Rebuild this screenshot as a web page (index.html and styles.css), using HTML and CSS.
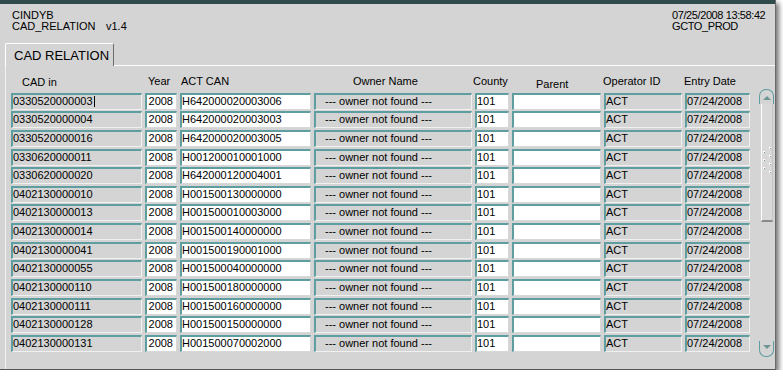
FILE: index.html
```html
<!DOCTYPE html>
<html>
<head>
<meta charset="utf-8">
<title>CAD_RELATION</title>
<link rel="stylesheet" href="styles.css">
</head>
<body>
<div class="window">
  <div class="titlebar"></div>
  <header class="head">
    <div class="head-left">
      <div>CINDYB</div>
      <div><span class="app">CAD_RELATION</span>v1.4</div>
    </div>
    <div class="head-right">
      <div>07/25/2008 13:58:42</div>
      <div>GCTO_PROD</div>
    </div>
  </header>
  <div class="tabs">
    <div class="tab">CAD RELATION</div>
    <div class="tabfill"></div>
  </div>
  <div class="panel">
    <div class="table">
      <div class="th th-cad">CAD in</div>
      <div class="th th-year">Year</div>
      <div class="th th-can">ACT CAN</div>
      <div class="th th-owner">Owner Name</div>
      <div class="th th-county">County</div>
      <div class="th th-parent">Parent</div>
      <div class="th th-op">Operator ID</div>
      <div class="th th-date">Entry Date</div>

      <div class="f g">0330520000003<span class="caret"></span></div><div class="f w r">2008</div><div class="f w">H642000020003006</div><div class="f g owner">--- owner not found ---</div><div class="f w">101</div><div class="f w"></div><div class="f g">ACT</div><div class="f g">07/24/2008</div>
      <div class="f g">0330520000004</div><div class="f w r">2008</div><div class="f w">H642000020003003</div><div class="f g owner">--- owner not found ---</div><div class="f w">101</div><div class="f w"></div><div class="f g">ACT</div><div class="f g">07/24/2008</div>
      <div class="f g">0330520000016</div><div class="f w r">2008</div><div class="f w">H642000020003005</div><div class="f g owner">--- owner not found ---</div><div class="f w">101</div><div class="f w"></div><div class="f g">ACT</div><div class="f g">07/24/2008</div>
      <div class="f g">0330620000011</div><div class="f w r">2008</div><div class="f w">H001200010001000</div><div class="f g owner">--- owner not found ---</div><div class="f w">101</div><div class="f w"></div><div class="f g">ACT</div><div class="f g">07/24/2008</div>
      <div class="f g">0330620000020</div><div class="f w r">2008</div><div class="f w">H642000120004001</div><div class="f g owner">--- owner not found ---</div><div class="f w">101</div><div class="f w"></div><div class="f g">ACT</div><div class="f g">07/24/2008</div>
      <div class="f g">0402130000010</div><div class="f w r">2008</div><div class="f w">H001500130000000</div><div class="f g owner">--- owner not found ---</div><div class="f w">101</div><div class="f w"></div><div class="f g">ACT</div><div class="f g">07/24/2008</div>
      <div class="f g">0402130000013</div><div class="f w r">2008</div><div class="f w">H001500010003000</div><div class="f g owner">--- owner not found ---</div><div class="f w">101</div><div class="f w"></div><div class="f g">ACT</div><div class="f g">07/24/2008</div>
      <div class="f g">0402130000014</div><div class="f w r">2008</div><div class="f w">H001500140000000</div><div class="f g owner">--- owner not found ---</div><div class="f w">101</div><div class="f w"></div><div class="f g">ACT</div><div class="f g">07/24/2008</div>
      <div class="f g">0402130000041</div><div class="f w r">2008</div><div class="f w">H001500190001000</div><div class="f g owner">--- owner not found ---</div><div class="f w">101</div><div class="f w"></div><div class="f g">ACT</div><div class="f g">07/24/2008</div>
      <div class="f g">0402130000055</div><div class="f w r">2008</div><div class="f w">H001500040000000</div><div class="f g owner">--- owner not found ---</div><div class="f w">101</div><div class="f w"></div><div class="f g">ACT</div><div class="f g">07/24/2008</div>
      <div class="f g">0402130000110</div><div class="f w r">2008</div><div class="f w">H001500180000000</div><div class="f g owner">--- owner not found ---</div><div class="f w">101</div><div class="f w"></div><div class="f g">ACT</div><div class="f g">07/24/2008</div>
      <div class="f g">0402130000111</div><div class="f w r">2008</div><div class="f w">H001500160000000</div><div class="f g owner">--- owner not found ---</div><div class="f w">101</div><div class="f w"></div><div class="f g">ACT</div><div class="f g">07/24/2008</div>
      <div class="f g">0402130000128</div><div class="f w r">2008</div><div class="f w">H001500150000000</div><div class="f g owner">--- owner not found ---</div><div class="f w">101</div><div class="f w"></div><div class="f g">ACT</div><div class="f g">07/24/2008</div>
      <div class="f g">0402130000131</div><div class="f w r">2008</div><div class="f w">H001500070002000</div><div class="f g owner">--- owner not found ---</div><div class="f w">101</div><div class="f w"></div><div class="f g">ACT</div><div class="f g">07/24/2008</div>
    </div>
    <div class="scroll">
      <div class="sbtn up"><span class="tri-up"></span></div>
      <div class="thumb">
        <svg class="grip" width="10" height="28" viewBox="0 0 10 28">
          <rect x="6" y="0" width="2" height="2" fill="#ffffff"/><rect x="7" y="1" width="1" height="1" fill="#6fa3a3"/>
          <rect x="0" y="4" width="2" height="2" fill="#ffffff"/><rect x="1" y="5" width="1" height="1" fill="#6fa3a3"/>
          <rect x="6" y="8" width="2" height="2" fill="#ffffff"/><rect x="7" y="9" width="1" height="1" fill="#6fa3a3"/>
          <rect x="0" y="12" width="2" height="2" fill="#ffffff"/><rect x="1" y="13" width="1" height="1" fill="#6fa3a3"/>
          <rect x="6" y="16" width="2" height="2" fill="#ffffff"/><rect x="7" y="17" width="1" height="1" fill="#6fa3a3"/>
          <rect x="0" y="20" width="2" height="2" fill="#ffffff"/><rect x="1" y="21" width="1" height="1" fill="#6fa3a3"/>
          <rect x="6" y="24" width="2" height="2" fill="#ffffff"/><rect x="7" y="25" width="1" height="1" fill="#6fa3a3"/>
        </svg>
      </div>
      <div class="track"></div>
      <div class="sbtn down"><span class="tri-down"></span></div>
    </div>
  </div>
</div>
</body>
</html>
```
FILE: styles.css
```css
html, body {
  margin: 0;
  padding: 0;
  background: #ffffff;
}
body {
  font-family: "Liberation Sans", Arial, sans-serif;
  font-size: 11px;
  color: #000;
}
.window {
  width: 775px;
  height: 369px;
  background: #d4d4d4;
  border-right: 1px solid #6a6a6a;
  border-bottom: 1px solid #555;
  box-shadow: 3px 3px 5px rgba(0, 0, 0, 0.55);
  display: flex;
  flex-direction: column;
  overflow: hidden;
}
.titlebar {
  height: 4px;
  flex: none;
  background: #2f4a4b;
}
.head {
  flex: none;
  height: 39px;
  box-sizing: border-box;
  display: flex;
  padding: 6px 0 0 12px;
  line-height: 11px;
}
.app {
  display: inline-block;
  width: 94px;
}
.head-right {
  margin-left: auto;
  width: 103px;
  letter-spacing: -0.4px;
  white-space: nowrap;
}
.tabs {
  flex: none;
  height: 23px;
  display: flex;
}
.tab {
  margin-left: 5px;
  width: 99px;
  box-sizing: content-box;
  padding: 4px 0 0 8px;
  border-top: 1px solid #fff;
  border-left: 1px solid #fff;
  border-right: 1px solid #6c6c6c;
  border-radius: 2px 2px 0 0;
  font-size: 13px;
  line-height: 15px;
  white-space: nowrap;
}
.tabfill {
  flex: 1;
  border-bottom: 1px solid #fff;
}
.panel {
  flex: 1;
  margin-left: 5px;
  border-left: 1px solid #f2f2f2;
  padding: 6px 0 0 5px;
  display: flex;
  gap: 9px;
  align-items: flex-start;
}
.table {
  display: grid;
  grid-template-columns: 131px 32px 131px 158px 34px 89px 78px 65px;
  grid-template-rows: 19px;
  grid-auto-rows: 17px;
  column-gap: 3px;
  row-gap: 1.65px;
}
.th {
  padding-top: 3px;
  line-height: 12px;
  white-space: nowrap;
}
.th-cad { padding-left: 11px; padding-top: 4px; }
.th-year { padding-left: 3px; }
.th-can { padding-left: 1px; }
.th-owner { padding-left: 39px; }
.th-county { margin-left: -2px; }
.th-parent { padding-left: 24px; padding-top: 6px; }
.th-op { margin-left: -1px; }
.th-date { margin-left: -1px; }
.f {
  position: relative;
  box-sizing: border-box;
  height: 17px;
  border-top: 2px solid #5f9ea0;
  border-left: 2px solid #5f9ea0;
  border-right: 1px solid #f0f0f0;
  border-bottom: 1px solid #f0f0f0;
  line-height: 13px;
  padding-left: 0;
  white-space: nowrap;
  overflow: hidden;
}
.g {
  background: #d4d4d4;
}
.w {
  background: #fff;
  border-right-color: #d8d8d8;
  border-bottom-color: #d8d8d8;
}
.r {
  text-align: right;
  padding-right: 3px;
}
.owner {
  padding-left: 9px;
}
.caret {
  display: inline-block;
  width: 1px;
  height: 11px;
  background: #000;
  vertical-align: -2px;
  margin-left: 1px;
}
.scroll {
  width: 15px;
  margin-top: 17px;
  height: 268px;
  display: flex;
  flex-direction: column;
}
.sbtn {
  box-sizing: border-box;
  display: flex;
  align-items: center;
  justify-content: center;
  background: #d4d4d4;
  border: 1px solid #5f9ea0;
}
.sbtn.up {
  height: 15px;
  border-bottom: none;
  border-radius: 7px 7px 0 0;
  padding-top: 2px;
}
.sbtn.down {
  height: 16px;
  border-top: none;
  border-radius: 0 0 7px 7px;
  padding-bottom: 3px;
}
.tri-up {
  width: 0;
  height: 0;
  border-left: 4px solid transparent;
  border-right: 4px solid transparent;
  border-bottom: 4px solid #6e9696;
}
.tri-down {
  width: 0;
  height: 0;
  border-left: 4px solid transparent;
  border-right: 4px solid transparent;
  border-top: 4px solid #6e9696;
}
.thumb {
  height: 118px;
  box-sizing: border-box;
  margin: 0 1px 0 2px;
  background: #d8d8d8;
  border-left: 1px solid #fff;
  border-right: 1px solid #c4c4c4;
  border-bottom: 2px solid #8a8a8a;
  display: flex;
  flex-direction: column;
  align-items: flex-start;
}
.grip {
  display: block;
  margin: 43px 0 0 1px;
}
.track {
  flex: 1;
}
```
